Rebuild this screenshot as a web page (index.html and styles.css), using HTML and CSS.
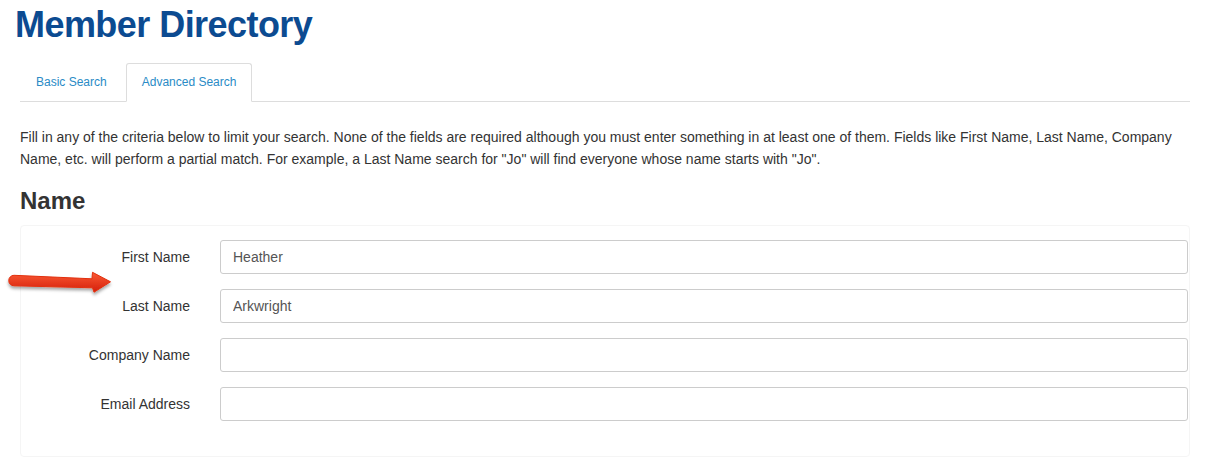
FILE: index.html
```html
<!DOCTYPE html>
<html lang="en">
<head>
<meta charset="UTF-8">
<meta name="viewport" content="width=device-width, initial-scale=1.0">
<title>Member Directory</title>
<link rel="stylesheet" href="styles.css">
</head>
<body>
<div class="container">
    <h1 class="page-title">Member Directory</h1>

    <ul class="tabs">
        <li class="tab"><a href="#">Basic Search</a></li>
        <li class="tab active"><a href="#">Advanced Search</a></li>
    </ul>

    <p class="intro">Fill in any of the criteria below to limit your search. None of the fields are required although you must enter something in at least one of them. Fields like First Name, Last Name, Company Name, etc. will perform a partial match. For example, a Last Name search for "Jo" will find everyone whose name starts with "Jo".</p>

    <h2 class="section-title">Name</h2>

    <div class="panel">
        <div class="form-row">
            <label for="first">First Name</label>
            <input id="first" type="text" value="Heather">
        </div>
        <div class="form-row">
            <label for="last">Last Name</label>
            <input id="last" type="text" value="Arkwright">
        </div>
        <div class="form-row">
            <label for="company">Company Name</label>
            <input id="company" type="text">
        </div>
        <div class="form-row">
            <label for="email">Email Address</label>
            <input id="email" type="text">
        </div>
    </div>
</div>

<!-- annotation arrow -->
<svg class="arrow" width="120" height="36" viewBox="0 0 120 36">
    <defs>
        <linearGradient id="arrowFill" x1="0" y1="0" x2="0" y2="1">
            <stop offset="0" stop-color="#fa5a35"/>
            <stop offset="1" stop-color="#d41e0a"/>
        </linearGradient>
        <filter id="arrowShadow" x="-10%" y="-30%" width="130%" height="180%">
            <feDropShadow dx="0" dy="2.5" stdDeviation="1.5" flood-color="#000" flood-opacity="0.35"/>
        </filter>
    </defs>
    <path d="M 14 10.3 L 92 13.8 L 92.5 7.3 L 110.5 16.8 L 94 27.2 L 92.5 22.8 L 14 20.8 A 5.25 5.25 0 0 1 14 10.3 Z"
          fill="url(#arrowFill)" stroke="#e2300f" stroke-width="1" stroke-linejoin="round" filter="url(#arrowShadow)"/>
</svg>
</body>
</html>
```

FILE: styles.css
```css
body {
    font-family: "Liberation Sans", Arial, sans-serif;
    margin: 0;
    padding: 0;
    background-color: #fff;
    color: #333;
}
.container {
    padding: 0 40px 0 20px;
}
.page-title {
    margin: 5px 0 18px -5px;
    font-size: 36px;
    line-height: 40px;
    font-weight: bold;
    color: #0c4b91;
    letter-spacing: -0.55px;
}
.tabs {
    display: flex;
    list-style: none;
    margin: 0;
    padding: 0;
    border-bottom: 1px solid #ddd;
}
.tab {
    margin-right: 3px;
    margin-bottom: -1px;
}
.tab a {
    display: block;
    padding: 9px 15px 10px;
    line-height: 18px;
    font-size: 12px;
    color: #2a8bc6;
    text-decoration: none;
    border: 1px solid transparent;
    border-radius: 3px 3px 0 0;
}
.tab.active a {
    background-color: #fff;
    border-color: #ddd #ddd transparent;
}
.intro {
    margin: 24px 0 18px;
    font-size: 14px;
    line-height: 22px;
}
.section-title {
    margin: 0 0 11px;
    font-size: 24px;
    line-height: 26px;
    font-weight: bold;
}
.panel {
    border: 1px solid #f5f5f5;
    border-radius: 4px;
    padding: 14px 1px 35px 0;
    display: flex;
    flex-direction: column;
    gap: 15px;
}
.form-row {
    display: flex;
    align-items: center;
    gap: 30px;
}
.form-row label {
    width: 169px;
    text-align: right;
    font-size: 14px;
}
.form-row input {
    flex: 1;
    height: 34px;
    box-sizing: border-box;
    padding: 0 12px;
    border: 1px solid #ccc;
    border-radius: 3px;
    font-family: inherit;
    font-size: 14px;
    color: #555;
}
.arrow {
    position: absolute;
    left: 0;
    top: 265px;
}
```
